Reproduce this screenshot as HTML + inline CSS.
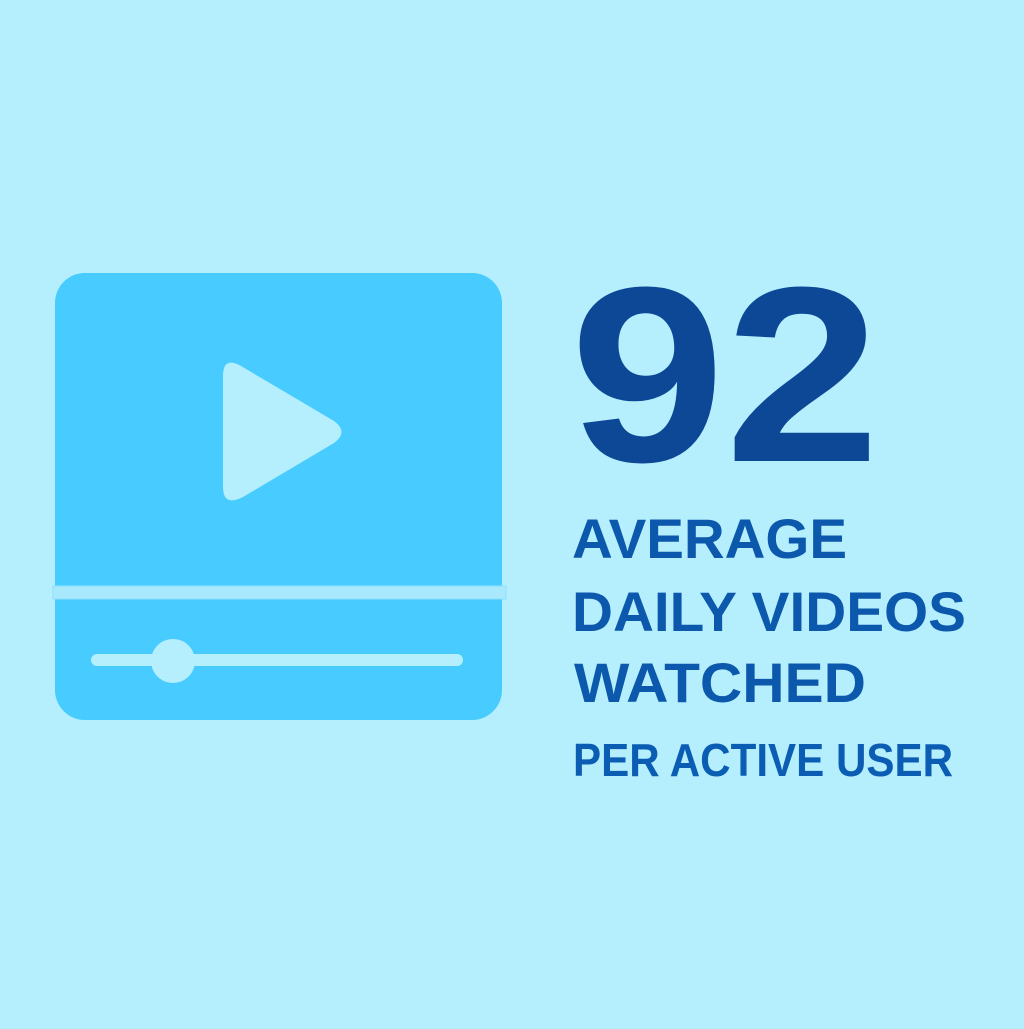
<!DOCTYPE html>
<html><head><style>
html,body{margin:0;padding:0;background:#b5effe;}
</style></head><body>
<svg width="1024" height="1024" viewBox="0 0 1024 1024" xmlns="http://www.w3.org/2000/svg">
<rect width="1024" height="1024" fill="#b5effe"/>
<rect x="55" y="273" width="447" height="447" rx="30" fill="#48cbfe"/>
<rect x="53" y="586" width="453" height="13" fill="#a8e9fd" stroke="#8fdffc" stroke-width="1"/>
<rect x="91" y="654" width="372" height="12" rx="6" fill="#b5effe"/>
<circle cx="173" cy="661" r="22" fill="#b5effe"/>
<path d="M223 376 Q223 356 241 366 L334 421 Q349 432 334 443 L243 497 Q223 507 223 487 Z" fill="#b5effe"/>
<g font-family="Liberation Sans, sans-serif" font-weight="bold">
<text x="570" y="461" font-size="250" fill="#0d4896" textLength="310" lengthAdjust="spacingAndGlyphs">92</text>
<text x="572" y="558" font-size="56" fill="#0b58ac" textLength="275" lengthAdjust="spacingAndGlyphs">AVERAGE</text>
<text x="572" y="631" font-size="56" fill="#0b58ac" textLength="394" lengthAdjust="spacingAndGlyphs">DAILY VIDEOS</text>
<text x="574" y="702" font-size="56" fill="#0b58ac" textLength="292" lengthAdjust="spacingAndGlyphs">WATCHED</text>
<text x="573" y="776" font-size="46" fill="#0b5cb3" textLength="380" lengthAdjust="spacingAndGlyphs">PER ACTIVE USER</text>
</g>
</svg>
</body></html>
